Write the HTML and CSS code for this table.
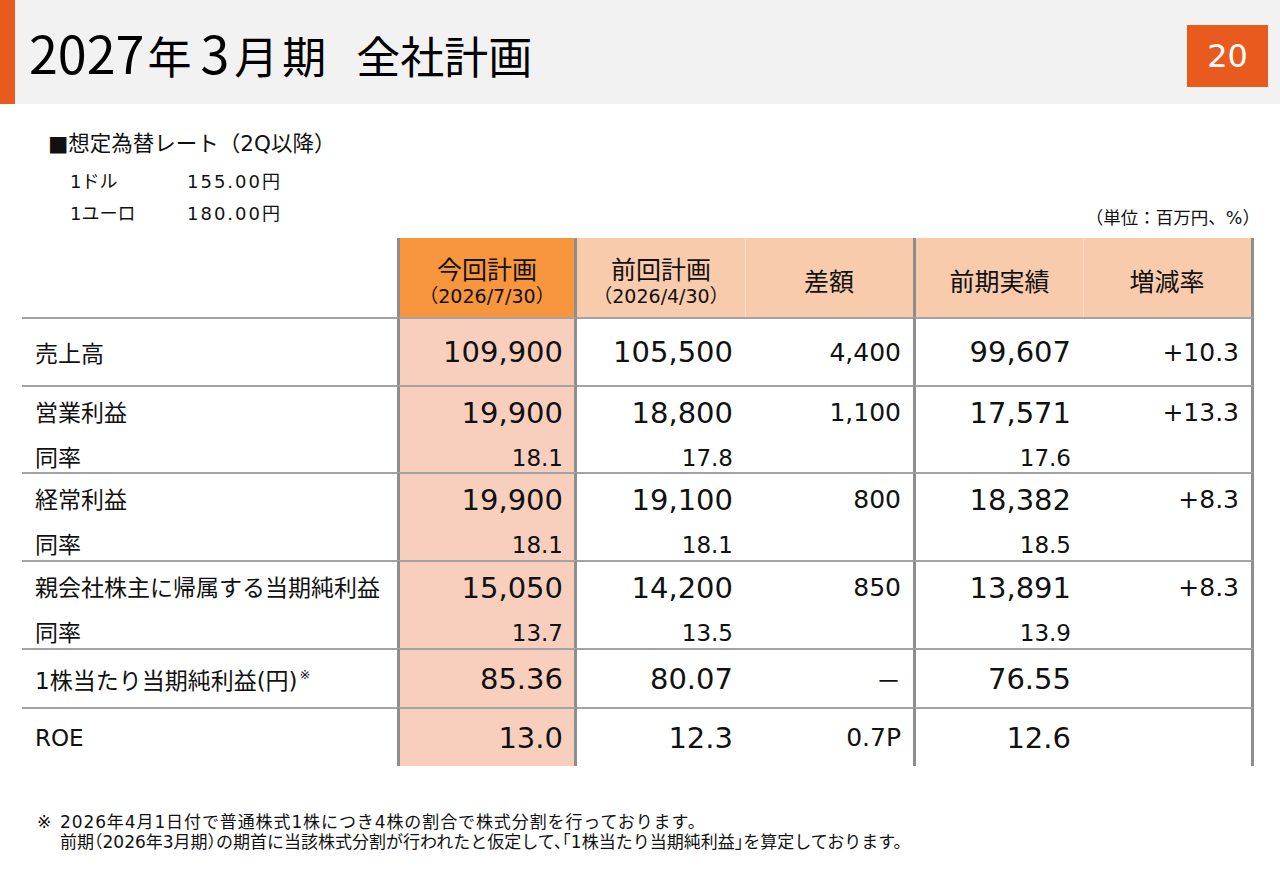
FILE: index.html
```html
<!DOCTYPE html>
<html lang="ja">
<head>
<meta charset="utf-8">
<title>2027年3月期 全社計画</title>
<link rel="stylesheet" href="styles.css">
</head>
<body>
<header class="band">
  <h1 class="title"><span class="d d1">2027</span>年<span class="d d3">3</span><span class="ls">月期</span><span class="gap">　</span>全社計画</h1>
  <div class="pno">20</div>
</header>
<main class="body">
  <section class="top">
    <div class="fx">
      <div class="fx-title">■想定為替レート（2Q以降）</div>
      <div class="fx-row first"><span class="fx-k">1ドル</span><span class="fx-v">155.00円</span></div>
      <div class="fx-row"><span class="fx-k">1ユーロ</span><span class="fx-v">180.00円</span></div>
    </div>
    <div class="unit">（単位：百万円、%）</div>
  </section>

  <div class="tbl">
    <div class="c hd k1"></div>
    <div class="c hd k2"><span class="h1">今回計画</span><span class="h2">（2026/7/30）</span></div>
    <div class="c hd k3 two-h"><span class="h1">前回計画</span><span class="h2">（2026/4/30）</span></div>
    <div class="c hd k4 sep">差額</div>
    <div class="c hd k5">前期実績</div>
    <div class="c hd k6 sep">増減率</div>

    <div class="c r k1 lab one">売上高</div>
    <div class="c r k2 v one"><span class="big">109,900</span></div>
    <div class="c r k3 v one"><span class="big">105,500</span></div>
    <div class="c r k4 v one"><span class="mid">4,400</span></div>
    <div class="c r k5 v one"><span class="big">99,607</span></div>
    <div class="c r k6 v one"><span class="mid">+10.3</span></div>

    <div class="c r k1 lab"><span class="m">営業利益</span><span class="s">同率</span></div>
    <div class="c r k2 v"><span class="m big">19,900</span><span class="s sm">18.1</span></div>
    <div class="c r k3 v"><span class="m big">18,800</span><span class="s sm">17.8</span></div>
    <div class="c r k4 v"><span class="m mid">1,100</span></div>
    <div class="c r k5 v"><span class="m big">17,571</span><span class="s sm">17.6</span></div>
    <div class="c r k6 v"><span class="m mid">+13.3</span></div>

    <div class="c r k1 lab"><span class="m">経常利益</span><span class="s">同率</span></div>
    <div class="c r k2 v"><span class="m big">19,900</span><span class="s sm">18.1</span></div>
    <div class="c r k3 v"><span class="m big">19,100</span><span class="s sm">18.1</span></div>
    <div class="c r k4 v"><span class="m mid">800</span></div>
    <div class="c r k5 v"><span class="m big">18,382</span><span class="s sm">18.5</span></div>
    <div class="c r k6 v"><span class="m mid">+8.3</span></div>

    <div class="c r k1 lab"><span class="m">親会社株主に帰属する当期純利益</span><span class="s">同率</span></div>
    <div class="c r k2 v"><span class="m big">15,050</span><span class="s sm">13.7</span></div>
    <div class="c r k3 v"><span class="m big">14,200</span><span class="s sm">13.5</span></div>
    <div class="c r k4 v"><span class="m mid">850</span></div>
    <div class="c r k5 v"><span class="m big">13,891</span><span class="s sm">13.9</span></div>
    <div class="c r k6 v"><span class="m mid">+8.3</span></div>

    <div class="c r k1 lab one">1株当たり当期純利益(円)<span class="kome">※</span></div>
    <div class="c r k2 v one"><span class="big">85.36</span></div>
    <div class="c r k3 v one"><span class="big">80.07</span></div>
    <div class="c r k4 v one"><span class="mid dash">－</span></div>
    <div class="c r k5 v one"><span class="big">76.55</span></div>
    <div class="c r k6 v one"></div>

    <div class="c r k1 lab one">ROE</div>
    <div class="c r k2 v one"><span class="big">13.0</span></div>
    <div class="c r k3 v one"><span class="big">12.3</span></div>
    <div class="c r k4 v one"><span class="mid">0.7P</span></div>
    <div class="c r k5 v one"><span class="big">12.6</span></div>
    <div class="c r k6 v one"></div>
  </div>

  <div class="note">
    <div class="note-row"><span class="km">※</span><span class="nt l1">2026年4月1日付で普通株式1株につき4株の割合で株式分割を行っております。</span></div>
    <div class="note-row indent"><span class="nt l2">前期（2026年3月期）の期首に当該株式分割が行われたと仮定して、「1株当たり当期純利益」を算定しております。</span></div>
  </div>
</main>
</body>
</html>
```

FILE: styles.css
```css
html, body {
  margin: 0;
  padding: 0;
}
body {
  width: 1280px;
  height: 886px;
  overflow: hidden;
  background: #ffffff;
  color: #111111;
  font-family: "DejaVu Sans", "Noto Sans CJK JP", sans-serif;
}

/* header band */
.band {
  height: 104px;
  box-sizing: border-box;
  background: #f2f2f2;
  border-left: 15px solid #e95a1f;
  display: flex;
  align-items: center;
  justify-content: space-between;
  padding: 0 12px 0 14px;
}
.title {
  margin: 0;
  font-family: "Noto Sans CJK JP", sans-serif;
  font-weight: 400;
  font-size: 44px;
  line-height: 1;
  color: #000;
  white-space: nowrap;
}
.title .d {
  font-size: 52px;
}
.title .d1 {
  margin-right: 3px;
}
.title .d3 {
  margin: 0 5px 0 9px;
}
.title .ls {
  letter-spacing: 4px;
}
.title .gap {
  letter-spacing: -18px;
}
.pno {
  width: 81px;
  height: 62px;
  margin-top: 8px;
  background: #e95a1f;
  color: #ffffff;
  font-family: "DejaVu Sans", sans-serif;
  font-size: 32px;
  display: flex;
  align-items: center;
  justify-content: center;
}

/* body */
.body {
  padding: 25px 26px 0 22px;
}
.top {
  height: 109px;
  display: flex;
  justify-content: space-between;
  align-items: flex-end;
}
.fx {
  align-self: flex-start;
  padding-left: 26px;
}
.fx-title {
  font-size: 21.5px;
  line-height: 30px;
}
.fx-row {
  display: flex;
  padding-left: 22px;
  font-size: 18px;
  line-height: 32px;
}
.fx-row.first {
  margin-top: 7px;
}
.fx-k {
  width: 117px;
}
.fx-v {
  letter-spacing: 2px;
}
.unit {
  font-size: 17.5px;
  line-height: 24px;
  margin-bottom: 8px;
  margin-right: -6px;
}

/* table */
.tbl {
  display: grid;
  grid-template-columns: 375px 180px 168px 168px 170px 171px;
  grid-template-rows: 79px 68px 87px 88px 88px 59px 59px;
}
.c {
  box-sizing: border-box;
  min-width: 0;
  white-space: nowrap;
}
.r {
  border-top: 2px solid #a3a3a3;
}
.k2 {
  background: #f8cfbd;
  border-left: 3px solid #8e8e8e;
  border-right: 3px solid #8e8e8e;
}
.k5 {
  border-left: 3px solid #8e8e8e;
}
.k6 {
  border-right: 3px solid #8e8e8e;
}

.hd {
  display: flex;
  flex-direction: column;
  align-items: center;
  justify-content: center;
  background: #f8cbad;
  font-family: "Noto Sans CJK JP", sans-serif;
  font-size: 25px;
  line-height: 30px;
  padding-top: 4px;
}
.hd.k1 {
  background: transparent;
}
.hd.k2 {
  background: #f7963c;
  padding-top: 8px;
}
.hd.two-h {
  padding-top: 8px;
}
.hd.sep {
  box-shadow: inset 1px 0 0 #fcdcc9;
}
.hd .h1 {
  line-height: 28px;
}
.hd .h2 {
  font-family: "DejaVu Sans", "Noto Sans CJK JP", sans-serif;
  font-size: 19px;
  line-height: 28px;
}

.lab {
  padding-left: 13px;
  font-size: 23px;
}
.v {
  text-align: right;
  padding-right: 12px;
}
.k2.v {
  padding-right: 11px;
}
.one {
  display: flex;
  align-items: center;
}
.one.v {
  justify-content: flex-end;
}
.m {
  display: block;
  height: 52px;
  line-height: 52px;
}
.s {
  display: block;
  height: 38px;
  line-height: 38px;
}
.big {
  font-size: 29px;
}
.mid {
  font-size: 25px;
}
.sm {
  font-size: 23px;
}
.dash {
  font-family: "Noto Sans CJK JP", sans-serif;
}
.kome {
  font-size: 13px;
  align-self: flex-start;
  margin-top: 17px;
  margin-left: 2px;
}

/* footnote */
.note {
  margin-top: 46px;
  padding-left: 15px;
  font-size: 17px;
  line-height: 20px;
}
.note-row {
  display: flex;
  white-space: nowrap;
  height: 20px;
}
.km {
  width: 23px;
  flex: none;
}
.note-row.indent {
  padding-left: 23px;
}
.nt.l1 {
  letter-spacing: 0.9px;
}
.nt.l2 {
  font-feature-settings: "halt";
}
```
